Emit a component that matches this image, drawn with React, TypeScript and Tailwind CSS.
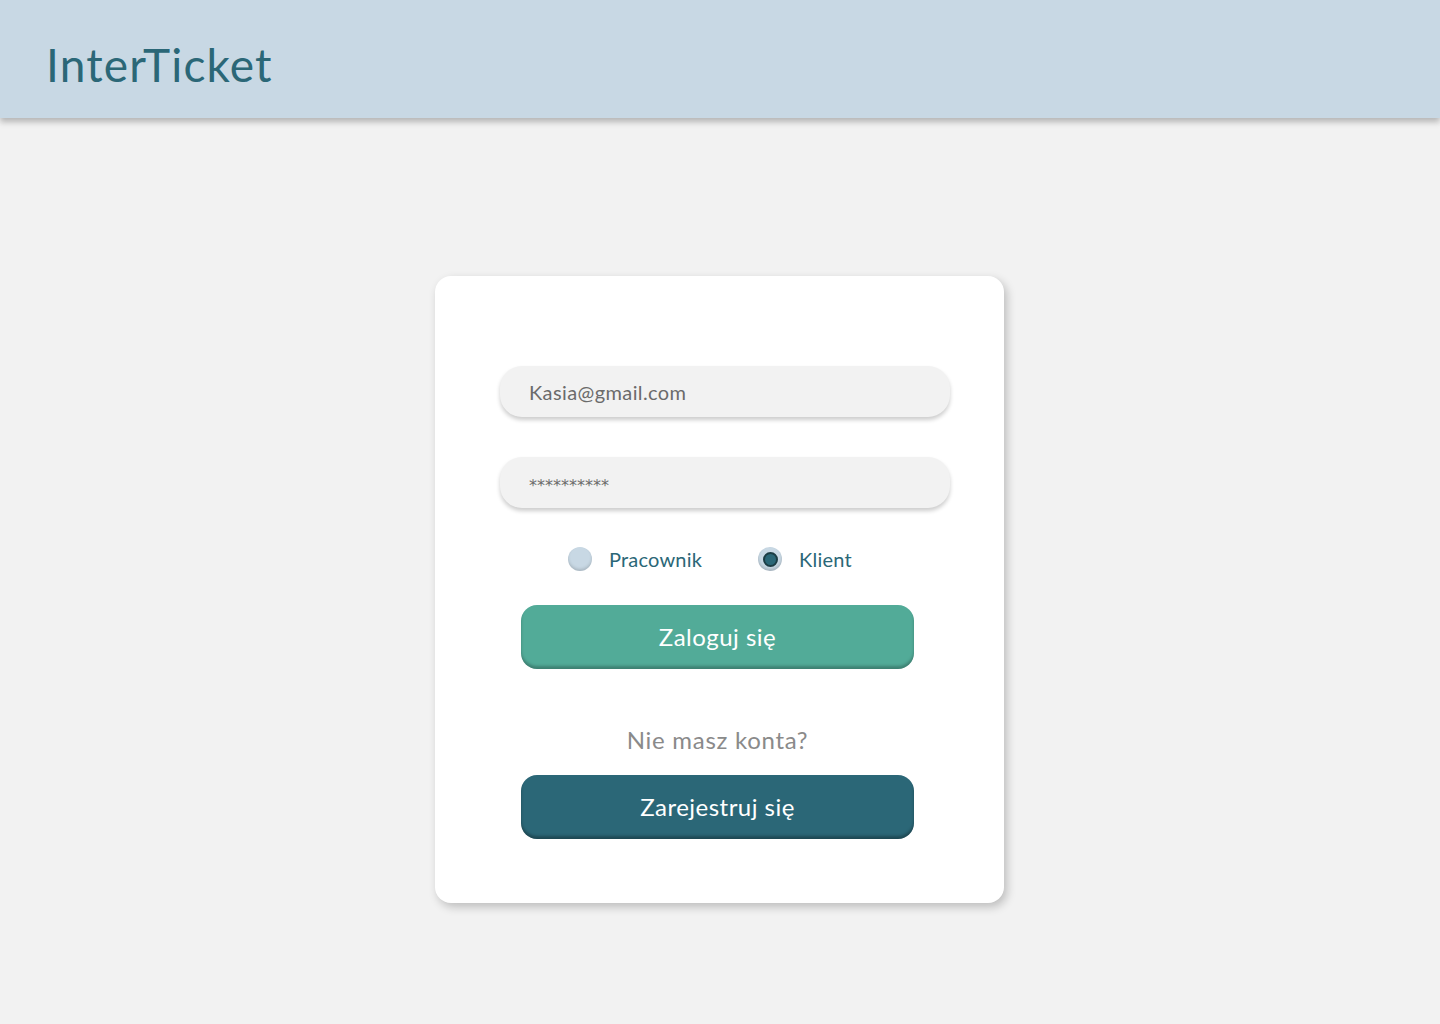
const font = { fontFamily: "Lato, 'Open Sans', sans-serif" };

function Radio({ label, checked }: { label: string; checked?: boolean }) {
  return (
    <label className="flex h-6 items-center gap-[17px]">
      <span
        className={
          checked
            ? "flex h-6 w-6 items-center justify-center rounded-full bg-[#c8d8e4] shadow-[inset_0_-2px_3px_rgba(0,0,0,0.18)]"
            : "h-6 w-6 rounded-full bg-[#c8d8e4] shadow-[inset_0_-2px_3px_rgba(0,0,0,0.15)]"
        }
      >
        {checked && (
          <span className="h-[15px] w-[15px] rounded-full border-2 border-[#1c3d45] bg-[#2b6777]" />
        )}
      </span>
      <span className="text-[20px] leading-6 tracking-[0.01em] text-[#2b6777]">{label}</span>
    </label>
  );
}

export default function App() {
  return (
    <div className="min-h-[1024px] bg-[#f2f2f2]" style={font}>
      <header className="flex h-[118px] items-center bg-[#c8d8e4] px-[46px] shadow-[0_4px_6px_rgba(0,0,0,0.25)]">
        <h1 className="pt-[10px] text-[46px] tracking-[0.025em] text-[#2b6777]">InterTicket</h1>
      </header>

      <main className="flex justify-center pt-[158px]">
        <div className="ml-[-1px] flex h-[627px] w-[569px] flex-col rounded-2xl bg-white pt-[90px] shadow-[3px_4px_10px_rgba(0,0,0,0.22)]">
          <div className="flex flex-col gap-10 pl-[65px]">
            <div className="flex h-[51px] w-[450px] items-center rounded-[22px] bg-[#f2f2f2] px-[29px] text-[20px] tracking-[0.02em] text-[#6b6b6b] shadow-[0_3px_4px_rgba(0,0,0,0.2)]">
              Kasia@gmail.com
            </div>
            <div className="flex h-[51px] w-[450px] items-center rounded-[22px] bg-[#f2f2f2] px-[29px] pt-[6px] font-['DejaVu_Sans',sans-serif] text-[16px] text-[#6b6b6b] shadow-[0_3px_4px_rgba(0,0,0,0.2)]">
              **********
            </div>
          </div>

          <div className="mt-[39px] flex gap-[56px] pl-[133px]">
            <Radio label="Pracownik" />
            <Radio label="Klient" checked />
          </div>

          <div className="mt-[34px] pl-[86px]">
            <button className="flex h-[64px] w-[393px] items-center justify-center rounded-2xl bg-[#52ab98] text-[24px] tracking-[0.02em] text-white shadow-[inset_0_-3px_3px_rgba(0,0,0,0.25)]">
              Zaloguj się
            </button>
          </div>

          <p className="mt-[56px] w-[479px] pl-[86px] text-center text-[24px] leading-[30px] tracking-[0.03em] text-[#8a8a8a]">
            Nie masz konta?
          </p>

          <div className="mt-[20px] pl-[86px]">
            <button className="flex h-[64px] w-[393px] items-center justify-center rounded-2xl bg-[#2b6777] text-[24px] tracking-[0.02em] text-white shadow-[inset_0_-3px_3px_rgba(0,0,0,0.3)]">
              Zarejestruj się
            </button>
          </div>
        </div>
      </main>
    </div>
  );
}
